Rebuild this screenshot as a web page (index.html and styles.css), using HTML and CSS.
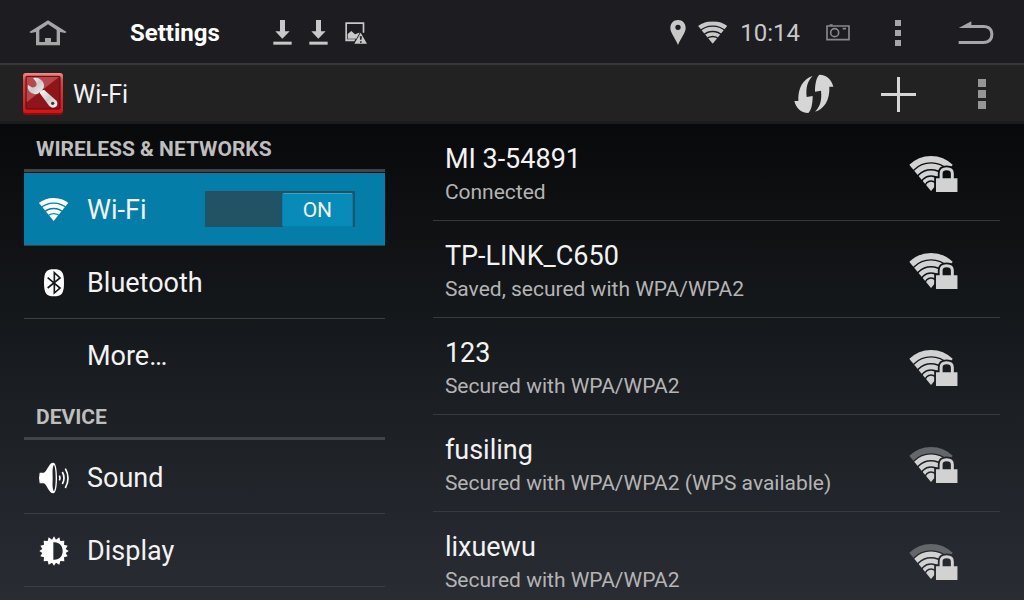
FILE: index.html
```
<!DOCTYPE html>
<html lang="en">
<head>
  <meta charset="UTF-8" />
  <meta name="viewport" content="width=device-width, initial-scale=1.0"/>
  <title>Settings</title>
  <link rel="stylesheet" href="styles.css">
</head>
<body>

  <!-- shared shapes -->
  <svg class="defs" width="0" height="0" aria-hidden="true">
    <defs>
      <clipPath id="wifi-fan"><path d="M44 68L-11 0H99Z"/></clipPath>
      <clipPath id="signal-fan"><path d="M66 106L-22 0H154Z"/></clipPath>
      <mask id="lock-gap" maskUnits="userSpaceOnUse" x="0" y="0" width="150" height="112">
        <rect width="150" height="112" fill="#fff"/>
        <path d="M81 67H92V53Q92 34 113 34Q135 34 135 53V67H146V109H81Z" fill="#000" stroke="#000" stroke-width="11"/>
      </mask>
      <symbol id="wifi" viewBox="0 0 90 68">
        <g clip-path="url(#wifi-fan)">
          <g class="bands">
            <circle cx="44" cy="73" r="66.5" stroke-width="13"/>
            <circle cx="44" cy="73" r="50" stroke-width="12"/>
            <circle cx="44" cy="73" r="34.5" stroke-width="11"/>
          </g>
          <circle cx="44" cy="73" r="25"/>
        </g>
      </symbol>
      <symbol id="download" viewBox="0 0 57 75">
        <path d="M21 0H36V34H50L28 56L7 34H21Z"/>
        <path d="M1 65H56V74H1Z"/>
      </symbol>
      <symbol id="signal" viewBox="0 0 150 112">
        <g mask="url(#lock-gap)">
          <g clip-path="url(#signal-fan)">
            <g class="bands">
              <circle class="outer" cx="66" cy="94" r="84.5" stroke-width="19"/>
              <circle cx="66" cy="94" r="63" stroke-width="16"/>
              <circle cx="66" cy="94" r="43" stroke-width="14"/>
              <circle cx="66" cy="94" r="26" stroke-width="11"/>
            </g>
            <circle cx="66" cy="94" r="16"/>
          </g>
        </g>
        <path d="M81 67H92V53Q92 34 113 34Q135 34 135 53V67H146V109H81ZM101 67H126V53Q126 43 113 43Q101 43 101 53Z" fill-rule="evenodd"/>
      </symbol>
    </defs>
  </svg>

  <header class="status-bar">
    <button class="key key-wide" aria-label="Home">
      <svg width="38" height="26" viewBox="0 0 114 78"><path d="M57 1L113 36L108 39L93 36V76H21V36L6 39L1 36ZM57 13L31 30V66H48V54H66V66H83V30Z" fill-rule="evenodd"/></svg>
    </button>
    <h1 class="app-name">Settings</h1>
    <div class="notifications">
      <svg width="19" height="25"><use href="#download"/></svg>
      <svg width="19" height="25"><use href="#download"/></svg>
      <svg width="22" height="22" viewBox="0 0 66 66">
        <path d="M1 1H58V32H53V6H6V52H31L28 58H1Z"/>
        <path d="M8 50V36L19 27L30 37L42 32H44L34 50Z"/>
        <path d="M47 32L66 65H28ZM44 43L46 54H49L51 43ZM45 58V62H50V58Z" fill-rule="evenodd"/>
      </svg>
    </div>
    <div class="indicators">
      <svg width="16" height="25" viewBox="0 0 48 75"><path d="M24 0C10 0 1 10 1 24C1 39 16 55 24 75C32 55 47 39 47 24C47 10 38 0 24 0ZM24 14A8 8 0 1 1 24 30A8 8 0 1 1 24 14Z" fill-rule="evenodd"/></svg>
      <svg width="30" height="23"><use href="#wifi"/></svg>
      <time class="clock">10:14</time>
    </div>
    <button class="key" aria-label="Screenshot">
      <svg class="camera" width="24" height="17" viewBox="0 0 72 51" fill="none" stroke-width="5"><path d="M3 6H69V47H3ZM11 3H20M50 14H60"/><circle cx="26" cy="26" r="12"/></svg>
    </button>
    <button class="key" aria-label="Menu">
      <svg width="6" height="26"><path d="M0 0H6V6H0ZM0 10H6V16H0ZM0 20H6V26H0Z"/></svg>
    </button>
    <button class="key key-wide" aria-label="Back">
      <svg width="36" height="26" viewBox="0 0 108 78"><path d="M2 24L40 4V15H76C97 15 106 27 106 43C106 60 97 72 76 72H2V63H76C91 63 97 55 97 43C97 31 91 24 76 24Z"/></svg>
    </button>
  </header>

  <div class="action-bar">
    <svg class="logo" width="40" height="42" viewBox="0 0 120 126">
      <defs>
        <linearGradient id="frame" x1="0" y1="0" x2="0" y2="1"><stop offset="0" stop-color="#f28a8a"/><stop offset=".2" stop-color="#d94343"/><stop offset="1" stop-color="#d31414"/></linearGradient>
        <linearGradient id="metal" x1="0" y1="0" x2="1" y2="1"><stop offset="0" stop-color="#fff"/><stop offset=".5" stop-color="#ccc"/><stop offset="1" stop-color="#f4f4f4"/></linearGradient>
      </defs>
      <rect width="120" height="126" rx="9" fill="#8c0d0d"/>
      <rect width="120" height="120" rx="9" fill="url(#frame)"/>
      <rect x="9" y="10" width="102" height="98" rx="3" fill="#8e1518" stroke="#5c0b0e" stroke-width="3"/>
      <path d="M11 12H108L11 88Z" fill="#b8484b"/>
      <path d="M30 15Q49 11 60 27Q66 39 60 48L53 55L45 62Q28 67 18 54Q12 46 15 36L26 43Q34 45 40 38Q43 30 37 24Z" fill="url(#metal)"/>
      <path d="M50 60Q51 50 64 51L101 84Q107 97 96 103Q87 107 79 99Z" fill="url(#metal)"/>
      <circle cx="89" cy="91" r="5" fill="#4a3130"/>
    </svg>
    <h2 class="page-title">Wi-Fi</h2>
    <button class="action" aria-label="WPS">
      <svg width="40" height="40" viewBox="42 223 120 120"><path id="wps" d="M98 229C70 237 53 265 55 304L43 304C48 325 62 339 85 340C94 331 98 313 98 289L80 292C77 265 82 245 98 229Z"/><use href="#wps" transform="rotate(180 101.500 282.500)"/></svg>
    </button>
    <button class="action" aria-label="Add network">
      <svg width="35" height="35"><path d="M16 0H19V16H35V19H19V35H16V19H0V16H16Z"/></svg>
    </button>
    <button class="action action-dim" aria-label="More options">
      <svg width="8" height="30"><path d="M0 0H8V8H0ZM0 11H8V19H0ZM0 22H8V30H0Z"/></svg>
    </button>
  </div>

  <main class="content">
    <nav class="sidebar">
      <h3 class="category">Wireless &amp; networks</h3>
      <div class="item active">
        <a class="item-link" href="#wifi-networks">
          <svg class="item-icon" width="30" height="23"><use href="#wifi"/></svg>
          Wi-Fi
        </a>
        <label class="switch">
          <input type="checkbox" role="switch" aria-label="Wi-Fi" checked>
          <span class="thumb">ON</span>
        </label>
      </div>
      <div class="item">
        <a class="item-link" href="#bluetooth">
          <svg class="item-icon" width="30" height="28" viewBox="0 0 90 84">
            <path d="M45 1C67 1 75 7 75 42C75 74 67 82 45 82C23 82 15 74 15 42C15 7 23 1 45 1Z"/>
            <path d="M26 26L63 57L46 72V11L63 27L26 57" fill="none" stroke="#16191c" stroke-width="5"/>
          </svg>
          Bluetooth
        </a>
      </div>
      <div class="item last">
        <a class="item-link no-icon" href="#more">More…</a>
      </div>
      <h3 class="category">Device</h3>
      <div class="item">
        <a class="item-link" href="#sound">
          <svg class="item-icon" width="32" height="32" viewBox="0 0 96 96">
            <path d="M5 32H18C28 27 32 2 46 2C53 2 57 20 57 48C57 76 53 94 46 94C32 94 28 69 18 64H5Q1 48 5 32ZM48 8C42 16 44 32 44 48C44 64 42 80 48 88C51 82 53 68 53 48C53 28 51 14 48 8Z" fill-rule="evenodd"/>
            <path d="M64 41Q68 48 64 55M73 30Q83 48 73 66M82 20Q98 48 82 78" fill="none" stroke="#fff" stroke-width="5"/>
          </svg>
          Sound
        </a>
      </div>
      <div class="item">
        <a class="item-link" href="#display">
          <svg class="item-icon" width="30" height="30" viewBox="0 0 90 90">
            <path d="M45 1L51 11L61 4L64 15L76 14L75 26L86 29L80 39L89 45L80 51L86 61L75 64L76 76L64 75L61 86L51 80L45 89L39 80L29 86L26 75L14 76L15 64L4 61L10 51L1 45L10 39L4 29L15 26L14 14L26 15L29 4L39 11ZM43 19V71C60 73 71 61 71 45C71 29 60 17 43 19Z" fill-rule="evenodd"/>
          </svg>
          Display
        </a>
      </div>
    </nav>

    <section class="networks" id="wifi-networks">
      <button class="network">
        <span class="info"><span class="ssid">MI 3-54891</span><span class="summary">Connected</span></span>
        <svg class="signal" width="50" height="37"><use href="#signal"/></svg>
      </button>
      <button class="network">
        <span class="info"><span class="ssid">TP-LINK_C650</span><span class="summary">Saved, secured with WPA/WPA2</span></span>
        <svg class="signal" width="50" height="37"><use href="#signal"/></svg>
      </button>
      <button class="network">
        <span class="info"><span class="ssid">123</span><span class="summary">Secured with WPA/WPA2</span></span>
        <svg class="signal" width="50" height="37"><use href="#signal"/></svg>
      </button>
      <button class="network">
        <span class="info"><span class="ssid">fusiling</span><span class="summary">Secured with WPA/WPA2 (WPS available)</span></span>
        <svg class="signal weak" width="50" height="37"><use href="#signal"/></svg>
      </button>
      <button class="network">
        <span class="info"><span class="ssid">lixuewu</span><span class="summary">Secured with WPA/WPA2</span></span>
        <svg class="signal weak" width="50" height="37"><use href="#signal"/></svg>
      </button>
    </section>
  </main>

</body>
</html>
```

FILE: styles.css
```
* {
  box-sizing: border-box;
}
body {
  margin: 0;
  height: 100vh;
  overflow: hidden;
  display: flex;
  flex-direction: column;
  font-family: Roboto, sans-serif;
  background: #08090a;
  color: #f3f3f3;
}
h1, h2, h3 {
  margin: 0;
  font-weight: 400;
}
button {
  padding: 0;
  border: none;
  background: none;
  color: inherit;
  font: inherit;
  cursor: pointer;
}
svg {
  display: block;
  flex: none;
  fill: currentColor;
}
.defs {
  position: absolute;
}
.bands {
  fill: none;
  stroke: currentColor;
}

/* status bar */
.status-bar {
  display: flex;
  flex: none;
  align-items: center;
  height: 65px;
  padding-top: 2px;
  border-bottom: 2px solid #38383c;
  background: #1d1c21;
}
.key {
  display: flex;
  align-items: center;
  justify-content: center;
  width: 60px;
  height: 100%;
  color: #a6a6a8;
}
.key-wide {
  width: 96px;
}
.app-name {
  margin-left: 34px;
  font-size: 24px;
  font-weight: 700;
  color: #fff;
}
.notifications {
  display: flex;
  align-items: center;
  gap: 17px;
  margin-left: 53px;
  color: #c8c8c8;
}
.indicators {
  display: flex;
  align-items: center;
  gap: 12px;
  margin-left: auto;
  margin-right: 8px;
  color: #c8c8c8;
}
.clock {
  font-size: 24px;
}
.camera {
  fill: none;
  stroke: #88888a;
}

/* action bar */
.action-bar {
  display: flex;
  flex: none;
  align-items: center;
  height: 59px;
  padding-top: 2px;
  padding-left: 23px;
  border-bottom: 3px solid #1b1b1b;
  background: #222;
}
.page-title {
  margin-left: 10px;
  margin-right: auto;
  font-size: 25px;
}
.action {
  display: flex;
  align-items: center;
  justify-content: center;
  width: 84px;
  height: 100%;
  color: #d6d6d6;
}
.action-dim {
  color: #969696;
}

/* content */
.content {
  flex: 1;
  min-height: 0;
  overflow: hidden;
  display: grid;
  grid-template-columns: 7fr 11fr;
  gap: 48px;
  padding: 0 24px;
  background: linear-gradient(#08090a, #15181b 40%, #292c33);
}
.category {
  height: 48px;
  margin-bottom: 1px;
  padding: 12px 12px 0;
  border-bottom: 3px solid #434446;
  font-size: 21px;
  line-height: 26px;
  font-weight: 700;
  text-transform: uppercase;
  color: #bebebe;
}
.item {
  display: flex;
  align-items: center;
  height: 73px;
  border-bottom: 1px solid #3c3f41;
}
.item.last {
  border-bottom-color: transparent;
}
.item.active {
  background: #047ea9;
}
.item-link {
  display: flex;
  flex: 1;
  align-items: center;
  height: 100%;
  padding-top: 1px;
  padding-left: 14px;
  font-size: 27px;
  color: inherit;
  text-decoration: none;
}
.item-link.no-icon {
  padding-left: 63px;
}
.item-icon {
  width: 32px;
  margin-right: 17px;
  color: #fff;
}
.switch {
  display: grid;
  width: 150px;
  height: 36px;
  margin-right: 30px;
  padding: 2px;
  background: #215364;
  cursor: pointer;
}
.switch input {
  grid-area: 1 / 1;
  margin: 0;
  appearance: none;
}
.thumb {
  grid-area: 1 / 1;
  justify-self: end;
  width: 71px;
  border: 1px solid #087fa6;
  border-top-color: #3ba2c4;
  border-radius: 2px;
  background: #078cba;
  font-size: 21px;
  line-height: 32px;
  text-align: center;
}
.network {
  display: flex;
  align-items: center;
  justify-content: space-between;
  width: 100%;
  height: 97px;
  padding: 4px 41px 0 12px;
  border-bottom: 1px solid #37393b;
  text-align: left;
}
.info {
  display: flex;
  flex-direction: column;
}
.ssid {
  font-size: 27px;
  line-height: 36px;
}
.summary {
  font-size: 21px;
  line-height: 30px;
  color: #b4b4b4;
}
.signal {
  color: #d2d2d2;
}
.weak {
  --outer: #63666a;
}
.outer {
  stroke: var(--outer, currentColor);
}
```
